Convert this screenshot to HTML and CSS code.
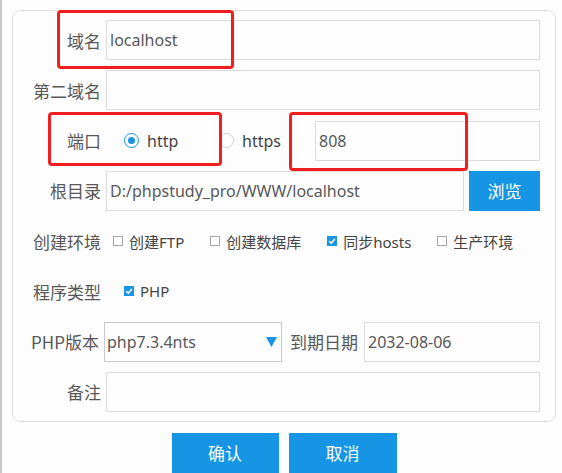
FILE: index.html
```html
<!DOCTYPE html>
<html lang="zh-CN">
<head>
<meta charset="utf-8">
<title>站点设置</title>
<link rel="stylesheet" href="styles.css">
</head>
<body>
<div class="page">
  <div class="card">
    <div class="row">
      <span class="lbl">域名</span>
      <div class="field">localhost</div>
    </div>
    <div class="row">
      <span class="lbl">第二域名</span>
      <div class="field"></div>
    </div>
    <div class="row">
      <span class="lbl">端口</span>
      <div class="radio-item"><span class="radio on"></span><span class="opt-text">http</span></div>
      <div class="radio-item second"><span class="radio"></span><span class="opt-text">https</span></div>
      <div class="field">808</div>
    </div>
    <div class="row">
      <span class="lbl">根目录</span>
      <div class="field root">D:/phpstudy_pro/WWW/localhost</div>
      <button class="btn browse" type="button">浏览</button>
    </div>
    <div class="row">
      <span class="lbl">创建环境</span>
      <div class="checks">
        <span class="chk-item"><span class="chk"></span>创建FTP</span>
        <span class="chk-item"><span class="chk"></span>创建数据库</span>
        <span class="chk-item"><span class="chk on"><svg viewBox="0 0 10 10" width="10" height="10"><path d="M2.2 5.2 L4.2 7.1 L7.9 3" fill="none" stroke="#fff" stroke-width="1.5"/></svg></span>同步hosts</span>
        <span class="chk-item"><span class="chk"></span>生产环境</span>
      </div>
    </div>
    <div class="row">
      <span class="lbl">程序类型</span>
      <div class="checks single">
        <span class="chk-item"><span class="chk on"><svg viewBox="0 0 10 10" width="10" height="10"><path d="M2.2 5.2 L4.2 7.1 L7.9 3" fill="none" stroke="#fff" stroke-width="1.5"/></svg></span>PHP</span>
      </div>
    </div>
    <div class="row">
      <span class="lbl narrow">PHP版本</span>
      <div class="select">
        <span>php7.3.4nts</span>
        <svg class="caret" viewBox="0 0 11 10" width="11" height="10"><polygon points="0,0 11,0 5.5,10" fill="#1a94e4"/></svg>
      </div>
      <span class="lbl-inline">到期日期</span>
      <div class="field">2032-08-06</div>
    </div>
    <div class="row">
      <span class="lbl">备注</span>
      <div class="field"></div>
    </div>
  </div>
  <div class="actions">
    <button class="btn ok" type="button">确认</button>
    <button class="btn cancel" type="button">取消</button>
  </div>
</div>
<div class="mark mark-domain"></div>
<div class="mark mark-port"></div>
<div class="mark mark-num"></div>
</body>
</html>
```
FILE: styles.css
```css
html, body {
  margin: 0;
  padding: 0;
  background: #fdfdfd;
}
body {
  position: relative;
  width: 562px;
  height: 473px;
  overflow: hidden;
  font-family: "Noto Sans", "Noto Sans CJK SC", sans-serif;
  color: #555;
}
.page {
  border-left: 2px solid #c8c8c8;
  height: 473px;
  box-sizing: border-box;
  padding-top: 10px;
}
.card {
  margin-left: 10px;
  width: 544px;
  box-sizing: border-box;
  border: 1px solid #dedede;
  border-radius: 8px;
  padding: 9px 15px 9px 0;
  display: flex;
  flex-direction: column;
  gap: 10.29px;
}
.row {
  display: flex;
  align-items: center;
  height: 40px;
}
.lbl {
  width: 93px;
  flex: none;
  box-sizing: border-box;
  padding-right: 5px;
  text-align: right;
  font-family: "Noto Sans CJK SC", sans-serif;
  font-size: 17px;
  color: #585858;
}
.lbl.narrow {
  width: 91px;
}
.field {
  flex: 1;
  height: 40px;
  box-sizing: border-box;
  border: 1px solid #dcdcdc;
  background: #fdfdfd;
  display: flex;
  align-items: center;
  padding-left: 3px;
  font-size: 16px;
  color: #585858;
  min-width: 0;
}
.radio-item {
  display: flex;
  align-items: center;
  width: 113px;
  flex: none;
  box-sizing: border-box;
  padding-left: 18px;
  font-size: 16px;
  color: #444;
}
.radio-item.second {
  width: 96px;
  padding-left: 0;
}
.radio {
  width: 15px;
  height: 15px;
  box-sizing: border-box;
  border: 1px solid #cfcfcf;
  border-radius: 50%;
  background: #fff;
  margin-right: 8px;
  display: flex;
  align-items: center;
  justify-content: center;
}
.radio.on {
  border-color: #1a94e4;
}
.radio.on::after {
  content: "";
  width: 7px;
  height: 7px;
  border-radius: 50%;
  background: #1a94e4;
}
.opt-text {
  line-height: 1;
}
.btn {
  border: 0;
  background: #1695e4;
  color: #fff;
  font-family: "Noto Sans CJK SC", sans-serif;
  font-size: 17px;
  padding: 0;
  cursor: pointer;
}
.browse {
  width: 71px;
  height: 40px;
  margin-left: 5px;
  flex: none;
}
.checks {
  display: flex;
  align-items: center;
  gap: 26px;
  padding-left: 7px;
  font-family: "Noto Sans", "Noto Sans CJK SC", sans-serif;
  font-size: 15px;
  color: #444;
}
.checks.single {
  padding-left: 18px;
}
.chk-item {
  display: flex;
  align-items: center;
  gap: 6px;
}
.chk {
  width: 10px;
  height: 10px;
  box-sizing: border-box;
  border: 1px solid #a8a8a8;
  background: #fff;
  display: block;
  flex: none;
}
.chk.on {
  border: 0;
  background: #1a94e4;
}
.chk svg {
  display: block;
}
.select {
  width: 178px;
  height: 40px;
  flex: none;
  box-sizing: border-box;
  border: 1px solid #c9c9c9;
  display: flex;
  align-items: center;
  justify-content: space-between;
  padding: 0 4px 0 2px;
  font-size: 16px;
  color: #585858;
}
.caret {
  display: block;
}
.lbl-inline {
  margin: 0 6px 0 8px;
  font-family: "Noto Sans CJK SC", sans-serif;
  font-size: 17px;
  color: #585858;
  flex: none;
}
.actions {
  margin-left: 10px;
  width: 544px;
  margin-top: 11px;
  display: flex;
  justify-content: center;
  gap: 10px;
}
.ok {
  width: 107px;
  height: 40px;
}
.cancel {
  width: 108px;
  height: 40px;
}
.mark {
  position: absolute;
  box-sizing: border-box;
  border: 3px solid #f01e1e;
  border-radius: 4px;
}
.mark-domain {
  left: 57px;
  top: 10px;
  width: 177px;
  height: 59px;
}
.mark-port {
  left: 48px;
  top: 112px;
  width: 174px;
  height: 54px;
}
.mark-num {
  left: 289px;
  top: 112px;
  width: 179px;
  height: 59px;
}
```
